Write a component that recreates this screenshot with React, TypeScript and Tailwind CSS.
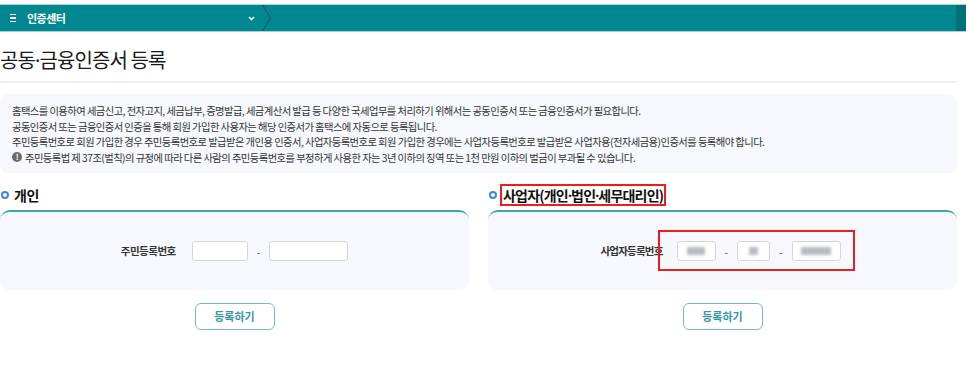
import React from 'react';

const font = { fontFamily: '"Noto Sans CJK KR", "Noto Sans", sans-serif' };

// narrow middle dot, as in the reference (CJK font draws it full width)
const Dot: React.FC = () => <span style={{ fontFamily: '"Noto Sans", sans-serif' }}>·</span>;

const Blur: React.FC<{ w: number }> = ({ w }) => (
  <span className="block h-[8px] bg-[#9aa0a8] blur-[1.5px] opacity-70" style={{ width: w }} />
);

const Input: React.FC<{ w: string; blur?: number }> = ({ w, blur }) => (
  <div className={`${w} h-[20px] rounded-[3px] border border-[#d4d6da] bg-white flex items-center justify-center`}>
    {blur ? <Blur w={blur} /> : null}
  </div>
);

const Dash: React.FC = () => <span className="mx-[9px] text-[10px] text-[#444]">-</span>;

const Heading: React.FC<{ children: React.ReactNode; boxed?: boolean }> = ({ children, boxed }) => (
  <div className="flex items-center h-[22px]">
    <span className="w-[8px] h-[8px] rounded-full border-2 border-[#3d7ff0] ml-[1px]" />
    {boxed ? (
      <span className="ml-[3px] h-[22px] flex items-center border-2 border-[#ee1c1c] px-[1px] text-[14px] font-bold text-[#111] tracking-[-0.8px]">
        {children}
      </span>
    ) : (
      <span className="ml-[5px] text-[14px] font-bold text-[#111] tracking-[-0.5px]">{children}</span>
    )}
  </div>
);

const Button: React.FC = () => (
  <div className="flex justify-center mt-[13px]">
    <button className="w-[80px] h-[27px] rounded-[6px] border border-[#6dbcc6] bg-white text-[11px] font-bold text-[#3a95a3]">
      등록하기
    </button>
  </div>
);

export default function App() {
  return (
    <div className="w-[966px] h-[377px] bg-white overflow-hidden" style={font}>
      {/* top bar */}
      <div className="mt-[4px] flex h-[28px] border-t border-b border-[#a8d2d7] bg-[#00878f]">
        <div className="flex items-center w-[262px] pl-[10px]">
          <span className="flex flex-col gap-[2px] w-[6px]">
            <span className="h-[1.5px] bg-white" />
            <span className="h-[1.5px] bg-white" />
            <span className="h-[1.5px] bg-white" />
          </span>
          <span className="ml-[11px] text-[11px] font-bold text-white tracking-[-0.5px]">인증센터</span>
          <svg className="ml-auto mr-[7px]" width="7" height="5" viewBox="0 0 7 5">
            <path d="M1 1l2.5 2.5L6 1" fill="none" stroke="white" strokeWidth="1.6" />
          </svg>
        </div>
        <svg width="10" height="26" viewBox="0 0 10 26" className="shrink-0">
          <path d="M0.5 0L8.5 13L0.5 26" fill="none" stroke="#0b5f67" strokeWidth="1.2" />
        </svg>
        <div className="flex-1" />
        <div className="w-[10px] bg-[#007079]" />
      </div>

      <div className="w-[957px]">
        <h1 className="mt-[14px] text-[20px] leading-[28px] text-[#1a1a1a] tracking-[-0.9px]">
          공동<Dot />금융인증서 등록
        </h1>
        <div className="mt-[6px] h-[2px] bg-[#f1f1f1]" />

        {/* notice */}
        <div className="mt-[11px] rounded-[8px] bg-[#f6f8fd] pl-[12px] pt-[9px] pb-[8px] text-[10.3px] leading-[15.5px] text-[#333] tracking-[-0.55px]">
          <p>홈택스를 이용하여 세금신고, 전자고지, 세금납부, 증명발급, 세금계산서 발급 등 다양한 국세업무를 처리하기 위해서는 공동인증서 또는 금융인증서가 필요합니다.</p>
          <p>공동인증서 또는 금융인증서 인증을 통해 회원 가입한 사용자는 해당 인증서가 홈택스에 자동으로 등록됩니다.</p>
          <p>주민등록번호로 회원 가입한 경우 주민등록번호로 발급받은 개인용 인증서, 사업자등록번호로 회원 가입한 경우에는 사업자등록번호로 발급받은 사업자용(전자세금용)인증서를 등록해야 합니다.</p>
          <p className="flex items-center">
            <span className="mr-[3px] w-[10px] h-[10px] rounded-full bg-[#6b6b6b] text-white text-[8px] leading-[10px] font-bold flex items-center justify-center">!</span>
            주민등록법 제 37조(벌칙)의 규정에 따라 다른 사람의 주민등록번호를 부정하게 사용한 자는 3년 이하의 징역 또는 1천 만원 이하의 벌금이 부과될 수 있습니다.
          </p>
        </div>

        {/* sections */}
        <div className="mt-[11px] grid grid-cols-2 gap-[19px]">
          <div>
            <Heading>개인</Heading>
            <div className="mt-[4px] h-[80px] rounded-[10px] border-t-2 border-[#3ea3ae] bg-[#f6f8fd] flex items-center justify-center">
              <span className="text-[10.5px] font-bold text-[#333] tracking-[-0.5px]">주민등록번호</span>
              <div className="ml-[16px] flex items-center">
                <Input w="w-[56px]" />
                <Dash />
                <Input w="w-[79px]" />
              </div>
            </div>
            <Button />
          </div>
          <div>
            <Heading boxed>
              사업자(개인<Dot />법인<Dot />세무대리인)
            </Heading>
            <div className="mt-[4px] h-[80px] rounded-[10px] border-t-2 border-[#3ea3ae] bg-[#f6f8fd] flex items-center justify-center pr-[4px]">
              <span className="text-[10.5px] font-bold text-[#333] tracking-[-0.8px]">사업자등록번호</span>
              <div className="relative ml-[14px] flex items-center">
                <Input w="w-[39px]" blur={18} />
                <Dash />
                <Input w="w-[33px]" blur={9} />
                <Dash />
                <Input w="w-[49px]" blur={30} />
                <span className="absolute left-[-19px] right-[-14px] top-[-11px] bottom-[-10px] border-2 border-[#ee1c1c]" />
              </div>
            </div>
            <Button />
          </div>
        </div>
      </div>
    </div>
  );
}
